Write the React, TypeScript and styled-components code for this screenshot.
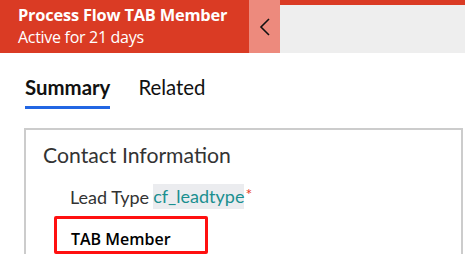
import React from "react";
import styled, {createGlobalStyle} from "styled-components";

const GlobalStyle = createGlobalStyle`
  html, body {
    margin: 0;
    padding: 0;
    background: #ffffff;
    font-family: Lato, "Open Sans", sans-serif;
  }
`

const Page = styled.div`
  width: 465px;
  height: 254px;
  overflow: hidden;
  background: #ffffff;
`

const HeaderBar = styled.header`
  display: flex;
  height: 53px;
`

const TitleBlock = styled.div`
  width: 249px;
  background: #da3b24;
  color: #ffffff;
  padding: 4px 0 0 18px;
  box-sizing: border-box;
  font-family: "Open Sans", sans-serif;
`

const Title = styled.div`
  font-weight: 700;
  font-size: 16.4px;
  line-height: 22px;
  letter-spacing: -0.2px;
`

const Subtitle = styled.div`
  font-size: 16px;
  line-height: 22px;
  letter-spacing: -0.3px;
`

const CollapseButton = styled.button`
  width: 31px;
  border: none;
  padding: 0;
  background: #ed8a7d;
  display: flex;
  align-items: center;
  justify-content: center;
`

const StageArea = styled.div`
  flex: 1;
  background: #eeeeee;
  border-top: 5px solid #da3b24;
`

const Tabs = styled.nav`
  display: flex;
  gap: 28px;
  padding: 20px 0 0 25px;
`

const Tab = styled.div<{ active?: boolean }>`
  font-size: 20.4px;
  line-height: 28px;
  color: #111111;
  font-weight: ${props => props.active ? 700 : 400};
  padding-bottom: 5px;
  border-bottom: 3px solid ${props => props.active ? "#2266e3" : "transparent"};
`

const Card = styled.section`
  margin: 19px 2px 0 24px;
  border: 2px solid #cccccc;
  border-bottom: none;
  padding: 11px 0 0 17px;
  height: 200px;
`

const CardTitle = styled.h2`
  margin: 0;
  font-size: 21.2px;
  line-height: 28px;
  font-weight: 400;
  color: #333333;
`

const FieldRow = styled.div`
  display: flex;
  align-items: center;
  margin: 15px 0 0 27px;
  font-size: 18px;
  color: #333333;
`

const FieldLabel = styled.span`
  margin-right: 4px;
`

const FieldToken = styled.span`
  background: #ebecef;
  color: #1a8f8f;
  padding: 1px 0 2px;
`

const Required = styled.span`
  color: #e8391f;
  margin-left: 1px;
  align-self: flex-start;
  font-size: 16px;
`

const Highlight = styled.div`
  width: 154px;
  height: 38px;
  box-sizing: border-box;
  margin: 7px 0 0 11px;
  border: 3px solid #ff1010;
  border-radius: 2px;
  padding: 10px 0 0 14px;
  font-family: "Open Sans", sans-serif;
  font-weight: 600;
  font-size: 16px;
  line-height: 20px;
  color: #000000;
`

const Chevron = () => (
  <svg width="12" height="18" viewBox="0 0 12 18">
    <path d="M10 1 L2 9 L10 17" fill="none" stroke="#111111" strokeWidth="1.6"/>
  </svg>
)

export default function App() {
  return (
    <Page>
      <GlobalStyle/>
      <HeaderBar>
        <TitleBlock>
          <Title>Process Flow TAB Member</Title>
          <Subtitle>Active for 21 days</Subtitle>
        </TitleBlock>
        <CollapseButton><Chevron/></CollapseButton>
        <StageArea/>
      </HeaderBar>
      <Tabs>
        <Tab active>Summary</Tab>
        <Tab>Related</Tab>
      </Tabs>
      <Card>
        <CardTitle>Contact Information</CardTitle>
        <FieldRow>
          <FieldLabel>Lead Type</FieldLabel>
          <FieldToken>cf_leadtype</FieldToken>
          <Required>*</Required>
        </FieldRow>
        <Highlight>TAB Member</Highlight>
      </Card>
    </Page>
  )
}
